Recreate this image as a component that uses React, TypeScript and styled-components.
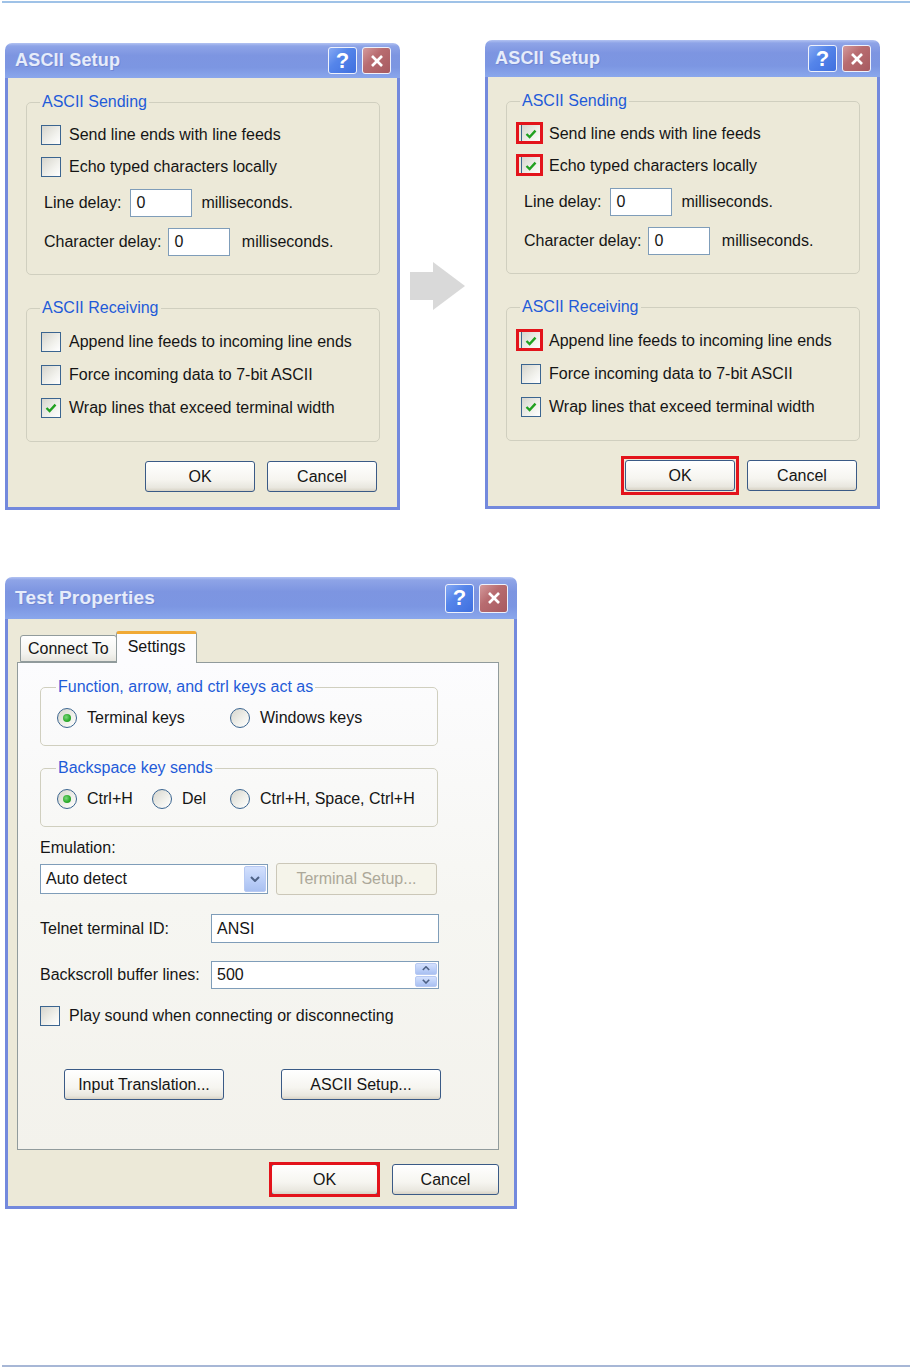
import React from 'react';
import styled, { createGlobalStyle, css } from 'styled-components';

const COLORS = {
  frame: '#7389dd',
  face: '#ece9d8',
  text: '#151515',
  legend: '#1f5bd8',
  groupLine: '#d0cfbf',
  field: '#7f9db9',
  tabLine: '#919b9c',
  red: '#e3131b',
  check: '#21a121',
  buttonLine: '#3a5a86',
};

const GlobalStyle = createGlobalStyle`
  html, body {
    margin: 0;
    padding: 0;
    background: #ffffff;
  }
  body {
    font-family: 'Liberation Sans', Arial, sans-serif;
    color: ${COLORS.text};
  }
`;

const Page = styled.div`
  width: 913px;
  height: 1368px;
  display: flex;
  flex-direction: column;
  box-sizing: border-box;
`;

const Rule = styled.div<{ $color: string }>`
  height: 2px;
  margin: 1px 3px 0 2px;
  background: ${(p) => p.$color};
`;

const BottomRule = styled(Rule)`
  margin-top: auto;
  margin-bottom: 1px;
`;

const TopRow = styled.div`
  display: flex;
  align-items: flex-start;
  margin-top: 37px;
  padding-left: 5px;
`;

const ArrowSlot = styled.div`
  width: 85px;
  padding: 222px 0 0 10px;
  box-sizing: border-box;
`;

/* ---------- window chrome ---------- */

const Window = styled.div<{ $w: number; $h: number; $top?: number; $left?: number }>`
  width: ${(p) => p.$w}px;
  height: ${(p) => p.$h}px;
  margin-top: ${(p) => p.$top ?? 0}px;
  margin-left: ${(p) => p.$left ?? 0}px;
  flex: none;
  display: flex;
  flex-direction: column;
  border-radius: 7px 7px 0 0;
  overflow: hidden;
  font-size: 16px;
`;

const TitleBar = styled.div<{ $h: number }>`
  height: ${(p) => p.$h}px;
  flex: none;
  display: flex;
  align-items: center;
  padding: 0 9px 0 10px;
  background: linear-gradient(
    180deg,
    #b3c3f2 0px,
    #8ea4e7 3px,
    #7d95e1 35%,
    #7c96e2 70%,
    #8aa7ec 100%
  );
`;

const TitleText = styled.span<{ $size: number }>`
  font-weight: bold;
  font-size: ${(p) => p.$size}px;
  color: #e6ecfa;
  text-shadow: 1px 1px 0 #7086d2;
  letter-spacing: 0.2px;
`;

const CaptionButtons = styled.div`
  margin-left: auto;
  display: flex;
  gap: 5px;
`;

const CaptionButton = styled.span<{ $kind: 'help' | 'close'; $w: number; $h: number }>`
  width: ${(p) => p.$w}px;
  height: ${(p) => p.$h}px;
  box-sizing: border-box;
  display: flex;
  align-items: center;
  justify-content: center;
  border: 1px solid #eef1fb;
  border-radius: 3px;
  color: #ffffff;
  font-weight: bold;
  font-size: 22px;
  background: ${(p) =>
    p.$kind === 'help'
      ? 'linear-gradient(135deg, #86a9f3 0%, #5585ea 40%, #3f6fdf 100%)'
      : 'linear-gradient(135deg, #d49a9c 0%, #b86c70 40%, #a75a60 100%)'};
`;

const Body = styled.div<{ $pad: string }>`
  flex: 1;
  display: flex;
  flex-direction: column;
  background: ${COLORS.face};
  border: 3px solid ${COLORS.frame};
  border-top: 0;
  padding: ${(p) => p.$pad};
`;

/* ---------- controls ---------- */

const Group = styled.fieldset<{ $pad: string; $top?: number }>`
  margin: ${(p) => p.$top ?? 0}px 0 0 0;
  padding: ${(p) => p.$pad};
  border: 1px solid ${COLORS.groupLine};
  border-radius: 5px;
  min-width: 0;
`;

const Legend = styled.legend`
  padding: 0 2px;
  margin-left: -1px;
  color: ${COLORS.legend};
  font-size: 16px;
  line-height: 18px;
`;

const Row = styled.div<{ $h?: number; $top?: number; $gap?: number }>`
  display: flex;
  align-items: center;
  height: ${(p) => (p.$h ? `${p.$h}px` : 'auto')};
  margin-top: ${(p) => p.$top ?? 0}px;
  gap: ${(p) => p.$gap ?? 8}px;
`;

const Box = styled.span<{ $mark?: boolean }>`
  position: relative;
  flex: none;
  width: 20px;
  height: 20px;
  box-sizing: border-box;
  border: 1px solid #3b6590;
  background: linear-gradient(135deg, #d6d5cd 0%, #f1f1ec 60%, #ffffff 100%);
  display: flex;
  align-items: center;
  justify-content: center;
  ${(p) =>
    p.$mark &&
    css`
      &::after {
        content: '';
        position: absolute;
        inset: -3px -3px -1px -6px;
        border: 3px solid ${COLORS.red};
      }
    `}
`;

const Tick = () => (
  <svg width="12" height="12" viewBox="0 0 12 12">
    <polyline points="1.5,6 4.6,9 10.5,2.6" fill="none" stroke={COLORS.check} strokeWidth="2.4" />
  </svg>
);

const CheckBox: React.FC<{ checked?: boolean; mark?: boolean }> = ({ checked, mark }) => (
  <Box $mark={mark}>{checked && <Tick />}</Box>
);

const Circle = styled.span<{ $on?: boolean }>`
  flex: none;
  width: 20px;
  height: 20px;
  box-sizing: border-box;
  border-radius: 50%;
  border: 1px solid #3b6590;
  background: linear-gradient(135deg, #d6d5cd 0%, #f1f1ec 60%, #ffffff 100%);
  display: flex;
  align-items: center;
  justify-content: center;

  &::after {
    content: '';
    display: ${(p) => (p.$on ? 'block' : 'none')};
    width: 8px;
    height: 8px;
    border-radius: 50%;
    background: radial-gradient(circle at 40% 40%, #7fd87f 0%, #2fae2f 55%, #1a8f1a 100%);
  }
`;

const RadioGrid = styled.div<{ $cols: string }>`
  display: grid;
  grid-template-columns: ${(p) => p.$cols};
  height: 32px;
  align-items: center;
`;

const RadioItem = styled.label<{ $span?: number }>`
  display: flex;
  align-items: center;
  gap: 10px;
  grid-column: span ${(p) => p.$span ?? 1};
`;

const Label = styled.span<{ $w?: number; $indent?: number }>`
  white-space: nowrap;
  line-height: 18px;
  width: ${(p) => (p.$w ? `${p.$w}px` : 'auto')};
  padding-left: ${(p) => p.$indent ?? 0}px;
  flex: none;
`;

const Field = styled.span<{ $w: number; $h: number }>`
  position: relative;
  flex: none;
  width: ${(p) => p.$w}px;
  height: ${(p) => p.$h}px;
  box-sizing: border-box;
  border: 1px solid ${COLORS.field};
  background: #ffffff;
  display: flex;
  align-items: center;
  padding-left: 5px;
`;

const DropButton = styled.span`
  position: absolute;
  right: 1px;
  top: 1px;
  bottom: 1px;
  width: 22px;
  box-sizing: border-box;
  border: 1px solid #b7c9f2;
  border-radius: 2px;
  background: linear-gradient(180deg, #d3e0fd 0%, #b9cdf7 60%, #a9c0f1 100%);
  display: flex;
  align-items: center;
  justify-content: center;
`;

const SpinStack = styled.span`
  position: absolute;
  right: 1px;
  top: 1px;
  bottom: 1px;
  width: 22px;
  display: flex;
  flex-direction: column;
  gap: 1px;
`;

const SpinHalf = styled.span`
  flex: 1;
  box-sizing: border-box;
  border: 1px solid #b7c9f2;
  border-radius: 2px;
  background: linear-gradient(180deg, #d3e0fd 0%, #b9cdf7 60%, #a9c0f1 100%);
  display: flex;
  align-items: center;
  justify-content: center;
`;

const Chevron: React.FC<{ dir: 'up' | 'down'; size?: number }> = ({ dir, size = 10 }) => (
  <svg width={size} height={size * 0.6} viewBox="0 0 10 6">
    <polyline
      points={dir === 'down' ? '1,1 5,5 9,1' : '1,5 5,1 9,5'}
      fill="none"
      stroke="#4d6185"
      strokeWidth="2"
    />
  </svg>
);

const Button = styled.span<{ $w: number; $h?: number; $ring?: number; $disabled?: boolean }>`
  position: relative;
  flex: none;
  width: ${(p) => p.$w}px;
  height: ${(p) => p.$h ?? 31}px;
  box-sizing: border-box;
  display: flex;
  align-items: center;
  justify-content: center;
  border-radius: 3px;
  white-space: nowrap;
  border: 1px solid ${(p) => (p.$disabled ? '#cbc7b8' : COLORS.buttonLine)};
  color: ${(p) => (p.$disabled ? '#aca899' : COLORS.text)};
  background: ${(p) =>
    p.$disabled
      ? '#f5f4ea'
      : 'linear-gradient(180deg, #ffffff 0%, #f6f5f0 60%, #e9e7df 88%, #d8d3c6 100%)'};
  ${(p) =>
    p.$ring !== undefined &&
    css`
      &::after {
        content: '';
        position: absolute;
        inset: -${p.$ring + 4}px;
        border: 3px solid ${COLORS.red};
      }
    `}
`;

const ButtonRow = styled.div<{ $top: number; $gap: number; $pad?: string; $start?: boolean }>`
  display: flex;
  justify-content: ${(p) => (p.$start ? 'flex-start' : 'flex-end')};
  gap: ${(p) => p.$gap}px;
  margin-top: ${(p) => p.$top}px;
  padding: ${(p) => p.$pad ?? '0'};
`;

/* ---------- tabs ---------- */

const TabStrip = styled.div`
  display: flex;
  align-items: flex-end;
  height: 31px;
  padding-left: 3px;
  position: relative;
  z-index: 1;
`;

const Tab = styled.span<{ $active?: boolean }>`
  box-sizing: border-box;
  display: flex;
  align-items: center;
  white-space: nowrap;
  border: 1px solid ${COLORS.tabLine};
  border-radius: 3px 3px 0 0;
  ${(p) =>
    p.$active
      ? css`
          height: 32px;
          margin-bottom: -1px;
          padding: 0 11px 3px;
          border-top: 3px solid #f0a935;
          border-bottom: 0;
          background: #fcfcfe;
          margin-left: -1px;
        `
      : css`
          height: 27px;
          padding: 1px 7px 0;
          background: linear-gradient(180deg, #ffffff 0%, #f3f3ef 70%, #e6e5de 100%);
        `}
`;

const TabPanel = styled.div`
  height: 488px;
  box-sizing: border-box;
  border: 1px solid ${COLORS.tabLine};
  background: linear-gradient(180deg, #fcfcfe 0%, #f6f6f2 50%, #f3f2ec 100%);
  padding: 15px 0 0 22px;
`;

const PanelColumn = styled.div`
  width: 398px;
  display: flex;
  flex-direction: column;
`;

/* ---------- pieces ---------- */

const CloseGlyph = () => (
  <svg width="14" height="14" viewBox="0 0 14 14">
    <line x1="2" y1="2" x2="12" y2="12" stroke="#ffffff" strokeWidth="2.6" />
    <line x1="12" y1="2" x2="2" y2="12" stroke="#ffffff" strokeWidth="2.6" />
  </svg>
);

const Caption: React.FC<{ title: string; h: number; size: number; bw: number; bh: number }> = ({
  title,
  h,
  size,
  bw,
  bh,
}) => (
  <TitleBar $h={h}>
    <TitleText $size={size}>{title}</TitleText>
    <CaptionButtons>
      <CaptionButton $kind="help" $w={bw} $h={bh}>
        ?
      </CaptionButton>
      <CaptionButton $kind="close" $w={bw} $h={bh}>
        <CloseGlyph />
      </CaptionButton>
    </CaptionButtons>
  </TitleBar>
);

const Arrow = () => (
  <svg width="56" height="49" viewBox="0 0 56 49">
    <polygon points="0,10 23,10 23,0 55,24 23,48 23,38 0,38" fill="#d9d9d9" />
  </svg>
);

type AsciiProps = {
  sendEnds?: boolean;
  echo?: boolean;
  append?: boolean;
  marked?: boolean;
  titleH: number;
  h: number;
  top?: number;
};

const AsciiSetup: React.FC<AsciiProps> = ({ sendEnds, echo, append, marked, titleH, h, top }) => (
  <Window $w={395} $h={h} $top={top}>
    <Caption title="ASCII Setup" h={titleH} size={18} bw={29} bh={27} />
    <Body $pad="15px 17px 0 18px">
      <Group $pad="8px 14px 18px">
        <Legend>ASCII Sending</Legend>
        <Row $h={32}>
          <CheckBox checked={sendEnds} mark={marked} />
          <Label>Send line ends with line feeds</Label>
        </Row>
        <Row $h={32}>
          <CheckBox checked={echo} mark={marked} />
          <Label>Echo typed characters locally</Label>
        </Row>
        <Row $top={6} $gap={9}>
          <Label $indent={3}>Line delay:</Label>
          <Field $w={62} $h={28}>0</Field>
          <Label>milliseconds.</Label>
        </Row>
        <Row $top={11} $gap={7}>
          <Label $indent={3}>Character delay:</Label>
          <Field $w={62} $h={28}>0</Field>
          <Label>&nbsp;milliseconds.</Label>
        </Row>
      </Group>
      <Group $pad="8px 14px 17px" $top={24}>
        <Legend>ASCII Receiving</Legend>
        <Row $h={33}>
          <CheckBox checked={append} mark={marked} />
          <Label>Append line feeds to incoming line ends</Label>
        </Row>
        <Row $h={33}>
          <CheckBox />
          <Label>Force incoming data to 7-bit ASCII</Label>
        </Row>
        <Row $h={33}>
          <CheckBox checked />
          <Label>Wrap lines that exceed terminal width</Label>
        </Row>
      </Group>
      <ButtonRow $top={19} $gap={12} $pad="0 3px 0 0">
        <Button $w={110} $ring={marked ? 1 : undefined}>
          OK
        </Button>
        <Button $w={110}>Cancel</Button>
      </ButtonRow>
    </Body>
  </Window>
);

const TestProperties = () => (
  <Window $w={512} $h={632} $top={67} $left={5}>
    <Caption title="Test Properties" h={42} size={19} bw={29} bh={29} />
    <Body $pad="12px 15px 0 9px">
      <TabStrip>
        <Tab>Connect To</Tab>
        <Tab $active>Settings</Tab>
      </TabStrip>
      <TabPanel>
        <PanelColumn>
          <Group $pad="6px 14px 11px 16px">
            <Legend>Function, arrow, and ctrl keys act as</Legend>
            <RadioGrid $cols="95px 78px 1fr">
              <RadioItem $span={2}>
                <Circle $on />
                <Label>Terminal keys</Label>
              </RadioItem>
              <RadioItem>
                <Circle />
                <Label>Windows keys</Label>
              </RadioItem>
            </RadioGrid>
          </Group>
          <Group $pad="6px 14px 11px 16px" $top={13}>
            <Legend>Backspace key sends</Legend>
            <RadioGrid $cols="95px 78px 1fr">
              <RadioItem>
                <Circle $on />
                <Label>Ctrl+H</Label>
              </RadioItem>
              <RadioItem>
                <Circle />
                <Label>Del</Label>
              </RadioItem>
              <RadioItem>
                <Circle />
                <Label>Ctrl+H, Space, Ctrl+H</Label>
              </RadioItem>
            </RadioGrid>
          </Group>
          <Row $top={12}>
            <Label>Emulation:</Label>
          </Row>
          <Row $top={6} $gap={8}>
            <Field $w={228} $h={30}>
              Auto detect
              <DropButton>
                <Chevron dir="down" />
              </DropButton>
            </Field>
            <Button $w={161} $h={32} $disabled>
              Terminal Setup...
            </Button>
          </Row>
          <Row $top={19} $gap={0}>
            <Label $w={171}>Telnet terminal ID:</Label>
            <Field $w={228} $h={29}>ANSI</Field>
          </Row>
          <Row $top={18} $gap={0}>
            <Label $w={171}>Backscroll buffer lines:</Label>
            <Field $w={228} $h={28}>
              500
              <SpinStack>
                <SpinHalf>
                  <Chevron dir="up" size={8} />
                </SpinHalf>
                <SpinHalf>
                  <Chevron dir="down" size={8} />
                </SpinHalf>
              </SpinStack>
            </Field>
          </Row>
          <Row $h={32} $top={11} $gap={9}>
            <CheckBox />
            <Label>Play sound when connecting or disconnecting</Label>
          </Row>
          <ButtonRow $top={37} $gap={57} $pad="0 0 0 24px" $start>
            <Button $w={160}>Input Translation...</Button>
            <Button $w={160}>ASCII Setup...</Button>
          </ButtonRow>
        </PanelColumn>
      </TabPanel>
      <ButtonRow $top={14} $gap={14}>
        <Button $w={107} $ring={-1}>
          OK
        </Button>
        <Button $w={107}>Cancel</Button>
      </ButtonRow>
    </Body>
  </Window>
);

const App: React.FC = () => (
  <>
    <GlobalStyle />
    <Page>
      <Rule $color="#9fc2e7" />
      <TopRow>
        <AsciiSetup titleH={35} h={467} top={3} />
        <ArrowSlot>
          <Arrow />
        </ArrowSlot>
        <AsciiSetup titleH={37} h={469} sendEnds echo append marked />
      </TopRow>
      <TestProperties />
      <BottomRule $color="#a7b7d6" />
    </Page>
  </>
);

export default App;
